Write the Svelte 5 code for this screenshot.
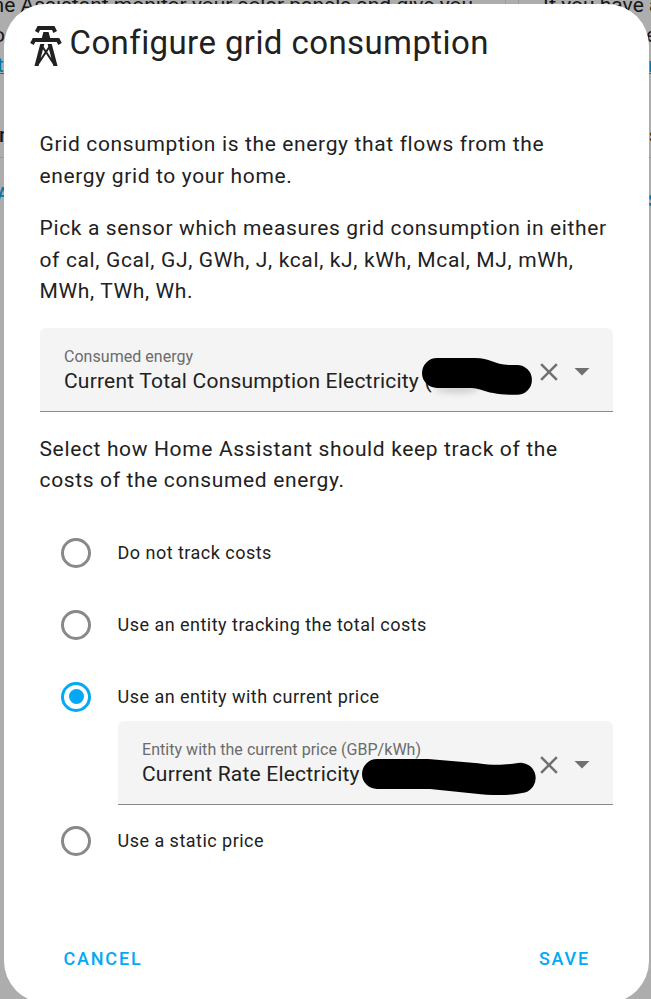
<script>
  const options = [
    { id: 'none', label: 'Do not track costs' },
    { id: 'total', label: 'Use an entity tracking the total costs' },
    { id: 'price', label: 'Use an entity with current price' },
    { id: 'static', label: 'Use a static price' }
  ];
  let selected = $state('price');
</script>

{#snippet controls()}
  <svg class="clear" viewBox="0 0 24 24"><path d="M19,6.41L17.59,5L12,10.59L6.41,5L5,6.41L10.59,12L5,17.59L6.41,19L12,13.41L17.59,19L19,17.59L13.41,12L19,6.41Z" /></svg>
  <svg class="arrow" viewBox="0 0 24 24"><path d="M7,10L12,15L17,10H7Z" /></svg>
{/snippet}

<div class="screen">
  <div class="backdrop" aria-hidden="true">
    <span class="bg" style="right: 178px; top: -10px">Let Home Assistant monitor your solar panels and give you</span>
    <span class="bg" style="left: 543px; top: -10px">If you have a</span>
    <span class="bg" style="right: 646px; top: 20px">to</span>
    <span class="bg" style="left: 646px; top: 20px">e</span>
    <span class="bg link" style="right: 647px; top: 50px">get</span>
    <span class="bg link" style="left: 648px; top: 50px">more</span>
    <span class="bg strong" style="left: -1px; top: 120px">n</span>
    <span class="bg strong" style="left: 649px; top: 120px">s</span>
    <span class="bg action" style="left: -3px; top: 180px">A</span>
    <span class="bg action" style="left: 648px; top: 187px">S</span>
    <i class="card-edge" style="left: 505px"></i>
    <i class="card-edge" style="left: 518px"></i>
    <i class="divider"></i>
  </div>

  <div class="dialog" role="dialog" aria-label="Configure grid consumption">
    <header>
      <svg class="tower" viewBox="0 0 24 24"><path d="M8.28,5.45L6.5,4.55L7.76,2H16.23L17.5,4.55L15.72,5.44L15,4H9L8.28,5.45M18.62,8H14.09L13.3,5H10.7L9.91,8H5.38L4.1,10.55L5.89,11.44L6.62,10H17.38L18.1,11.45L19.89,10.56L18.62,8M17.77,22H15.7L15.46,21.1L12,15.9L8.53,21.1L8.3,22H6.23L9.12,11H11.19L10.83,12.35L12,14.1L13.16,12.35L12.81,11H14.88L17.77,22M11.4,15L10.5,13.65L9.32,18.13L11.4,15M14.68,18.12L13.5,13.64L12.6,15L14.68,18.12Z" /></svg>
      <h2>Configure grid consumption</h2>
    </header>

    <main>
      <p>Grid consumption is the energy that flows from the<br />energy grid to your home.</p>
      <p>Pick a sensor which measures grid consumption in either<br />of cal, Gcal, GJ, GWh, J, kcal, kJ, kWh, Mcal, MJ, mWh,<br />MWh, TWh, Wh.</p>

      <div class="field">
        <div class="text">
          <span class="caption">Consumed energy</span>
          <span class="value">Current Total Consumption Electricity (</span>
        </div>
        {@render controls()}
        <svg class="mark" style="left: 378px; top: 26px" width="120" height="50" viewBox="418 354 120 50">
          <defs>
            <filter id="soft" x="-20%" y="-100%" width="140%" height="300%"><feGaussianBlur stdDeviation="3" /></filter>
          </defs>
          <ellipse cx="457" cy="389" rx="22" ry="4" fill="#ccc" filter="url(#soft)" />
          <path d="M437,358H475C490,358 494,364.5 509,365H517A14.8,14.8 0 0 1 517,394.8C500,395 490,393 480,389.5Q476,388 472,388H437A15,15 0 0 1 437,358Z" />
        </svg>
      </div>

      <p class="costs">Select how Home Assistant should keep track of the<br />costs of the consumed energy.</p>

      <div class="options" role="radiogroup">
        {#each options as option (option.id)}
          <label class="option">
            <input type="radio" name="costs" value={option.id} bind:group={selected} />
            <span class="radio"></span>
            <span class="label">{option.label}</span>
          </label>
          {#if option.id === 'price' && selected === 'price'}
            <div class="field nested">
              <div class="text">
                <span class="caption">Entity with the current price (GBP/kWh)</span>
                <span class="value">Current Rate Electricity</span>
              </div>
              {@render controls()}
              <svg class="mark" style="left: 240px; top: 34px" width="184" height="46" viewBox="358 755 184 46">
                <path d="M377,759H428L478,763.3C496,766 507,764.5 518,763A15.2,15.2 0 0 1 525,792.5C507,796.5 488,795 476,793.7L430,789H377A15,15 0 0 1 377,759Z" />
              </svg>
            </div>
          {/if}
        {/each}
      </div>
    </main>

    <footer>
      <button>CANCEL</button>
      <button>SAVE</button>
    </footer>
  </div>
</div>

<style>
  .screen {
    position: relative;
    box-sizing: border-box;
    width: 651px;
    height: 999px;
    padding: 4px 2px 0 4px;
    overflow: hidden;
    background: #adadad;
    color: #212121;
    font-family: Roboto, sans-serif;
  }
  .backdrop { position: absolute; inset: 0; }
  .bg {
    position: absolute;
    font-size: 21px;
    line-height: 30px;
    white-space: nowrap;
    color: #171717;
  }
  .link { color: #0377a9; text-decoration: underline; text-decoration-thickness: 1px; }
  .strong { font-weight: 500; }
  .action { color: #0377a9; font-size: 18px; line-height: 27px; font-weight: 500; }
  .card-edge { position: absolute; top: 0; width: 1px; height: 20px; background: #999; }
  .divider { position: absolute; top: 157px; left: 0; right: 0; height: 1px; background: #999; }
  .dialog {
    position: relative;
    display: flex;
    flex-direction: column;
    box-sizing: border-box;
    height: 999px;
    border-radius: 42px;
    background: #fff;
  }
  header { display: flex; height: 125px; padding: 18px 0 0 18px; box-sizing: border-box; }
  svg { flex: none; }
  .tower { width: 48px; height: 48px; fill: #212121; }
  h2 {
    margin: 0 0 0 -0.5px;
    font-size: 33px;
    line-height: 42px;
    font-weight: 400;
    letter-spacing: 0.41px;
    white-space: nowrap;
  }
  main { padding: 0 36px; }
  p {
    margin: 0 0 21px -0.5px;
    font-size: 21px;
    line-height: 31.5px;
    letter-spacing: 0.64px;
    white-space: nowrap;
  }
  .field {
    position: relative;
    display: flex;
    align-items: center;
    box-sizing: border-box;
    height: 84px;
    margin-top: -1px;
    padding: 0 13px 0 24px;
    border-bottom: 1px solid #8a8a8a;
    border-radius: 6px 6px 0 0;
    background: #f4f4f4;
  }
  .text { display: flex; flex: 1; flex-direction: column; min-width: 0; padding-top: 2px; white-space: nowrap; }
  .caption { font-size: 16px; line-height: 22px; letter-spacing: 0.04px; color: #6b6b6b; }
  .value { font-size: 21px; line-height: 27px; letter-spacing: 0.2px; }
  .clear { width: 30px; height: 30px; margin: 6px 0 0; fill: #707070; }
  .arrow { width: 36px; height: 36px; margin: 4px 0 0; fill: #707070; }
  .mark { position: absolute; fill: #000; }
  .costs { margin-top: 22px; margin-bottom: 20px; }
  .option { display: flex; align-items: center; height: 72px; padding-left: 21px; }
  .option input { position: absolute; opacity: 0; }
  .radio {
    display: flex;
    align-items: center;
    justify-content: center;
    box-sizing: border-box;
    width: 30px;
    height: 30px;
    border: 3px solid #888;
    border-radius: 50%;
  }
  input:checked + .radio { border-color: #03a9f4; }
  input:checked + .radio::after { content: ''; width: 15px; height: 15px; border-radius: 50%; background: #03a9f4; }
  .label { margin-left: 26.5px; font-size: 18px; letter-spacing: 0.48px; }
  .nested { margin: -12px 0 0 78px; }
  footer { display: flex; justify-content: space-between; padding: 68px 59px 0 59.5px; }
  button {
    padding: 0;
    border: 0;
    background: none;
    color: #03a9f4;
    font: 500 18px/27px Roboto, sans-serif;
    letter-spacing: 1.8px;
  }
</style>
